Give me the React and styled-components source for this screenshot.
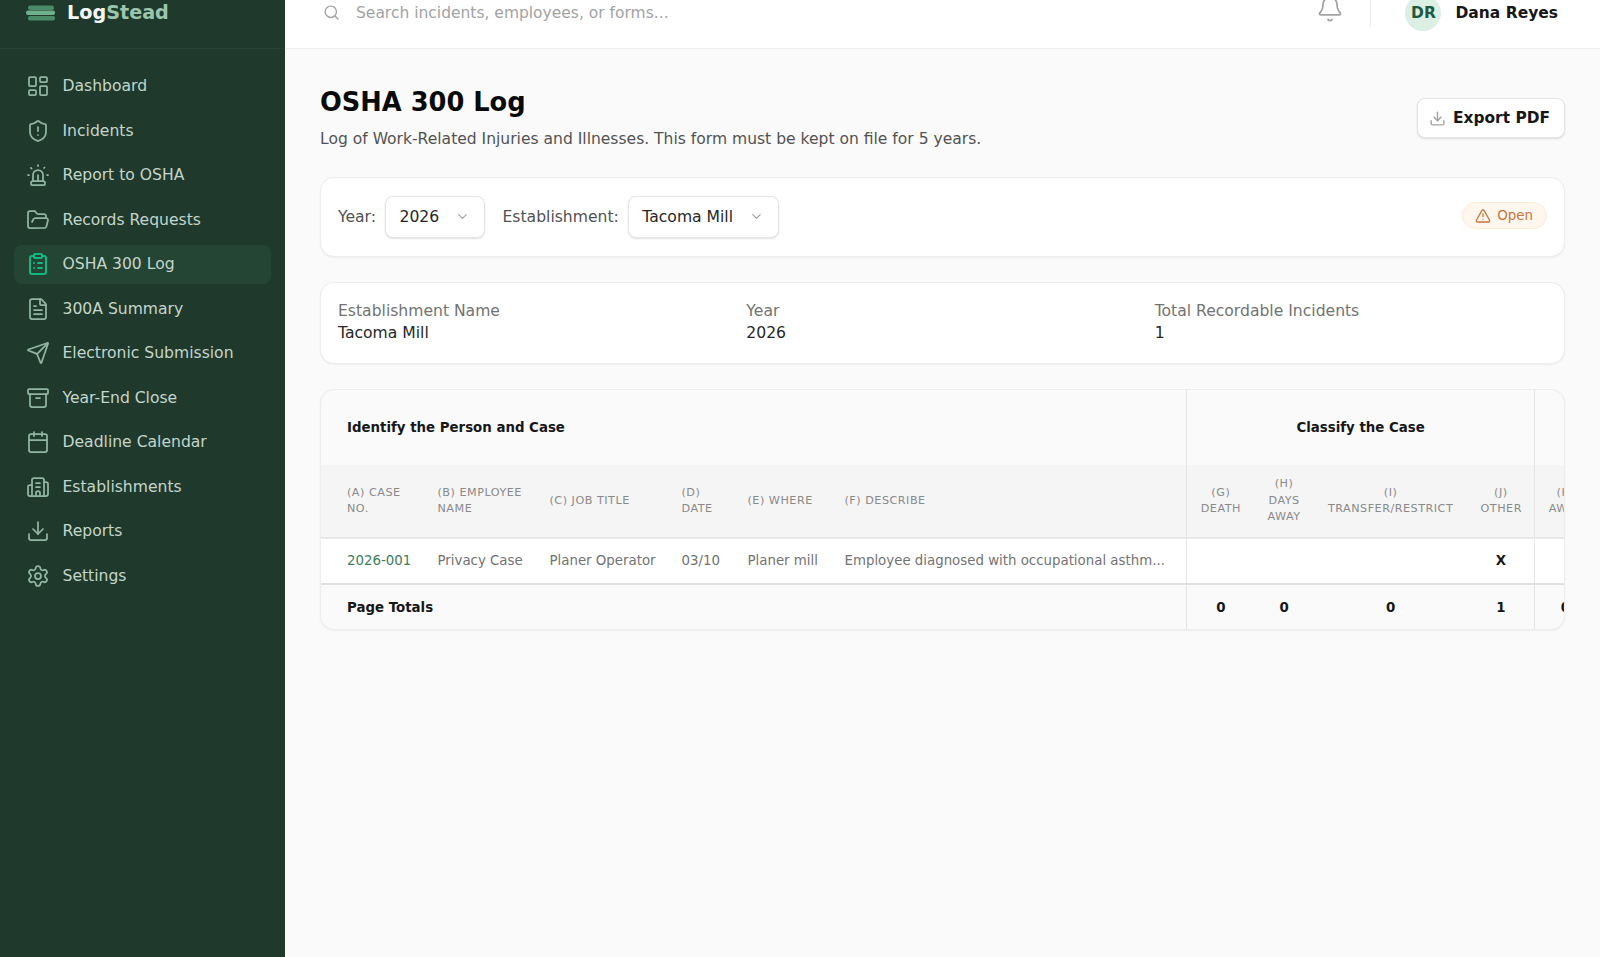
import styled, { createGlobalStyle } from "styled-components";
import {
  LayoutDashboard, ShieldAlert, Siren, FolderOpen, ClipboardList, FileText, Send,
  Archive, Calendar, Building2, Download, Settings, TriangleAlert, ChevronDown, Bell, Search,
} from "lucide-react";

const GlobalStyle = createGlobalStyle`
  html, body {
    margin: 0;
    height: 100%;
    overflow: hidden;
    background: #fafafa;
    font-family: "DejaVu Sans", Verdana, sans-serif;
  }
  * { box-sizing: border-box; }
`;

const Shell = styled.div`
  display: flex;
  height: 980px;
  margin-top: -23px;
`;

const Sidebar = styled.aside`
  width: 285px;
  flex-shrink: 0;
  background: #1f3a2d;
  display: flex;
  flex-direction: column;
`;
const Brand = styled.div`
  height: 72px;
  flex-shrink: 0;
  display: flex;
  align-items: center;
  gap: 11px;
  padding-left: 26px;
  border-bottom: 1px solid #254135;
`;
const BrandName = styled.span`
  font-size: 19.2px;
  font-weight: 700;
  color: #f5f7f6;
`;
const BrandAccent = styled.span`
  color: #9cc5ad;
`;
const Nav = styled.nav`
  display: flex;
  flex-direction: column;
  gap: 6px;
  padding: 18px 14px;
`;
const NavItem = styled.a`
  display: flex;
  align-items: center;
  gap: 12.5px;
  height: 38.5px;
  padding-left: 12px;
  border-radius: 8px;
  font-size: 15.6px;
  color: #c4d5cb;
  background: ${(props) => (props.$active ? "#244434" : "transparent")};
  svg {
    flex-shrink: 0;
    color: ${(props) => (props.$active ? "#10b981" : "#92b5a1")};
  }
`;

const Main = styled.div`
  flex: 1;
  min-width: 0;
  display: flex;
  flex-direction: column;
`;
const Header = styled.header`
  height: 72px;
  flex-shrink: 0;
  background: #fff;
  border-bottom: 1px solid #f0f0f0;
  display: flex;
  align-items: center;
  padding: 0 42px 0 38px;
`;
const SearchBox = styled.div`
  flex: 1;
  display: flex;
  align-items: center;
  gap: 16px;
  font-size: 15.5px;
  color: #a3a3a3;
  svg {
    color: #a3a3a3;
  }
`;
const BellButton = styled.div`
  display: flex;
  color: #a3a3a3;
  margin: 0 26px 7px 0;
`;
const Divider = styled.div`
  width: 1px;
  height: 28px;
  background: #ececec;
  margin-right: 34px;
`;
const Avatar = styled.div`
  width: 36px;
  height: 36px;
  border-radius: 50%;
  background: #dcefe4;
  color: #1f5a3f;
  font-size: 15.5px;
  font-weight: 700;
  display: flex;
  align-items: center;
  justify-content: center;
  margin-right: 14px;
`;
const UserName = styled.span`
  font-size: 15.5px;
  font-weight: 700;
  color: #171717;
`;

const Content = styled.main`
  flex: 1;
  min-width: 0;
  padding: 36px 35px 0 35px;
  display: flex;
  flex-direction: column;
`;
const TitleRow = styled.div`
  display: flex;
  justify-content: space-between;
  align-items: flex-start;
  margin-bottom: 25px;
`;
const Title = styled.h1`
  margin: 0 0 7px;
  font-size: 25.7px;
  line-height: 35px;
  font-weight: 700;
  color: #0a0a0a;
`;
const Subtitle = styled.p`
  margin: 0;
  font-size: 15.55px;
  line-height: 25px;
  color: #525252;
`;
const ExportButton = styled.button`
  display: flex;
  align-items: center;
  gap: 7px;
  height: 40px;
  margin-top: 13px;
  padding: 0 14px 0 11px;
  background: #fff;
  border: 1px solid #e5e5e5;
  border-radius: 8px;
  box-shadow: 0 1px 2px rgba(0, 0, 0, 0.12);
  font-family: inherit;
  font-size: 15.4px;
  font-weight: 700;
  color: #171717;
  svg {
    color: #a3a3a3;
  }
`;
const Card = styled.section`
  background: #fff;
  border: 1px solid #ededed;
  border-radius: 14px;
  box-shadow: 0 1px 2px rgba(0, 0, 0, 0.05);
  margin-bottom: 25px;
`;
const Toolbar = styled(Card)`
  height: 80px;
  display: flex;
  align-items: center;
  padding: 0 17px;
`;
const FilterLabel = styled.span`
  font-size: 15.6px;
  color: #525252;
  margin-right: 9px;
`;
const Select = styled.div`
  display: flex;
  align-items: center;
  justify-content: space-between;
  width: ${(props) => props.$width}px;
  height: 42px;
  padding: 0 14px 1px 13.5px;
  margin-right: 17.5px;
  background: #fff;
  border: 1px solid #e5e5e5;
  border-radius: 8px;
  box-shadow: 0 1px 2px rgba(0, 0, 0, 0.12);
  font-size: 15.6px;
  color: #262626;
  svg {
    color: #a3a3a3;
  }
`;
const Badge = styled.div`
  margin: 0 0 3px auto;
  display: flex;
  align-items: center;
  gap: 6px;
  height: 27px;
  padding: 0 13px 0 12.5px;
  background: #fff7ed;
  border: 1px solid #fdebd3;
  border-radius: 14px;
  font-size: 13.4px;
  color: #c8743f;
`;
const InfoCard = styled(Card)`
  display: grid;
  grid-template-columns: repeat(3, 1fr);
  gap: 16px;
  padding: 17px 17px 19px;
`;
const InfoLabel = styled.div`
  font-size: 15.6px;
  line-height: 22px;
  color: #737373;
`;
const InfoValue = styled.div`
  font-size: 15.6px;
  line-height: 22px;
  color: #262626;
`;

const TableCard = styled(Card)`
  overflow: hidden;
  background: #fafafa;
`;
const Table = styled.table`
  table-layout: fixed;
  width: ${(props) => props.$width}px;
  border-collapse: collapse;
`;
const GroupCell = styled.th`
  height: 75px;
  padding: 0 13px 0 ${(props) => (props.$first ? "26px" : "13px")};
  font-size: 13.35px;
  font-weight: 700;
  color: #171717;
  text-align: ${(props) => (props.$first ? "left" : "center")};
  border-left: ${(props) => (props.$first ? "none" : "1px solid #e5e5e5")};
`;
const HeadRow = styled.tr`
  background: #f5f5f5;
  border-bottom: 2px solid #e8e8e8;
`;
const HeadCell = styled.th`
  height: 73px;
  padding: 0 13px 0 ${(props) => (props.$first ? "26px" : "13px")};
  font-size: 11.2px;
  line-height: 16.5px;
  font-weight: 400;
  letter-spacing: 0.5px;
  color: #8a8a8a;
  text-transform: uppercase;
  text-align: ${(props) => (props.$center ? "center" : "left")};
  border-left: ${(props) => (props.$sep ? "1px solid #e5e5e5" : "none")};
`;
const BodyRow = styled.tr`
  background: #fff;
  border-bottom: 2px solid #e0e0e0;
`;
const BodyCell = styled.td`
  height: ${(props) => props.$height || 46}px;
  padding: 0 13px ${(props) => (props.$height ? 0 : 2)}px ${(props) => (props.$first ? "26px" : "13px")};
  font-size: 13.35px;
  color: ${(props) => (props.$link ? "#3f7d5c" : props.$strong ? "#171717" : "#737373")};
  font-weight: ${(props) => (props.$strong ? 700 : 400)};
  text-align: ${(props) => (props.$center ? "center" : "left")};
  white-space: nowrap;
  overflow: hidden;
  border-left: ${(props) => (props.$sep ? "1px solid #e5e5e5" : "none")};
`;

const LogoMark = () => (
  <svg width="30" height="16" viewBox="0 0 30 16" fill="none">
    <rect x="2" y="0.5" width="26" height="4.5" rx="2" fill="#4a8a68" />
    <rect x="0" y="5.5" width="29" height="4.5" rx="2" fill="#6fb08c" />
    <rect x="2" y="11" width="27" height="4.5" rx="2" fill="#4a8a68" />
  </svg>
);

const navItems = [
  { label: "Dashboard", icon: LayoutDashboard },
  { label: "Incidents", icon: ShieldAlert },
  { label: "Report to OSHA", icon: Siren },
  { label: "Records Requests", icon: FolderOpen },
  { label: "OSHA 300 Log", icon: ClipboardList, active: true },
  { label: "300A Summary", icon: FileText },
  { label: "Electronic Submission", icon: Send },
  { label: "Year-End Close", icon: Archive },
  { label: "Deadline Calendar", icon: Calendar },
  { label: "Establishments", icon: Building2 },
  { label: "Reports", icon: Download },
  { label: "Settings", icon: Settings },
];

const columns = [
  { label: "(A) Case No.", width: 103.5 },
  { label: "(B) Employee Name", width: 112 },
  { label: "(C) Job Title", width: 132 },
  { label: "(D) Date", width: 66 },
  { label: "(E) Where", width: 97 },
  { label: "(F) Describe", width: 355 },
  { label: "(G) Death", width: 68, center: true, sep: true },
  { label: "(H) Days Away", width: 59, center: true },
  { label: "(I) Transfer/Restrict", width: 154, center: true },
  { label: "(J) Other", width: 67, center: true },
  { label: "(K) Away", width: 61, center: true, sep: true },
];
const tableWidth = columns.reduce((total, col) => total + col.width, 0);

const App = () => {
  return (
    <>
      <GlobalStyle />
      <Shell>
        <Sidebar>
          <Brand>
            <LogoMark />
            <BrandName>
              Log<BrandAccent>Stead</BrandAccent>
            </BrandName>
          </Brand>
          <Nav>
            {navItems.map((item) => (
              <NavItem key={item.label} $active={item.active}>
                <item.icon size={24} strokeWidth={item.active ? 2 : 1.75} />
                {item.label}
              </NavItem>
            ))}
          </Nav>
        </Sidebar>
        <Main>
          <Header>
            <SearchBox>
              <Search size={17} />
              Search incidents, employees, or forms...
            </SearchBox>
            <BellButton>
              <Bell size={28} strokeWidth={1.5} />
            </BellButton>
            <Divider />
            <Avatar>DR</Avatar>
            <UserName>Dana Reyes</UserName>
          </Header>
          <Content>
            <TitleRow>
              <div>
                <Title>OSHA 300 Log</Title>
                <Subtitle>Log of Work-Related Injuries and Illnesses. This form must be kept on file for 5 years.</Subtitle>
              </div>
              <ExportButton>
                <Download size={17} />
                Export PDF
              </ExportButton>
            </TitleRow>
            <Toolbar>
              <FilterLabel>Year:</FilterLabel>
              <Select $width={100}>
                2026
                <ChevronDown size={15} />
              </Select>
              <FilterLabel>Establishment:</FilterLabel>
              <Select $width={151}>
                Tacoma Mill
                <ChevronDown size={15} />
              </Select>
              <Badge>
                <TriangleAlert size={16} />
                Open
              </Badge>
            </Toolbar>
            <InfoCard>
              <div>
                <InfoLabel>Establishment Name</InfoLabel>
                <InfoValue>Tacoma Mill</InfoValue>
              </div>
              <div>
                <InfoLabel>Year</InfoLabel>
                <InfoValue>2026</InfoValue>
              </div>
              <div>
                <InfoLabel>Total Recordable Incidents</InfoLabel>
                <InfoValue>1</InfoValue>
              </div>
            </InfoCard>
            <TableCard>
              <Table $width={tableWidth}>
                <colgroup>
                  {columns.map((col) => (
                    <col key={col.label} style={{ width: col.width }} />
                  ))}
                </colgroup>
                <thead>
                  <tr>
                    <GroupCell $first colSpan={6}>Identify the Person and Case</GroupCell>
                    <GroupCell colSpan={4}>Classify the Case</GroupCell>
                    <GroupCell />
                  </tr>
                  <HeadRow>
                    {columns.map((col, index) => (
                      <HeadCell key={col.label} $first={index === 0} $center={col.center} $sep={col.sep}>
                        {col.label}
                      </HeadCell>
                    ))}
                  </HeadRow>
                </thead>
                <tbody>
                  <BodyRow>
                    <BodyCell $first $link>2026-001</BodyCell>
                    <BodyCell>Privacy Case</BodyCell>
                    <BodyCell>Planer Operator</BodyCell>
                    <BodyCell>03/10</BodyCell>
                    <BodyCell>Planer mill</BodyCell>
                    <BodyCell>Employee diagnosed with occupational asthm...</BodyCell>
                    <BodyCell $sep />
                    <BodyCell />
                    <BodyCell />
                    <BodyCell $center $strong>X</BodyCell>
                    <BodyCell $sep />
                  </BodyRow>
                  <tr>
                    <BodyCell $first $strong $height={45} colSpan={6}>Page Totals</BodyCell>
                    <BodyCell $sep $center $strong $height={45}>0</BodyCell>
                    <BodyCell $center $strong $height={45}>0</BodyCell>
                    <BodyCell $center $strong $height={45}>0</BodyCell>
                    <BodyCell $center $strong $height={45}>1</BodyCell>
                    <BodyCell $sep $center $strong $height={45}>0</BodyCell>
                  </tr>
                </tbody>
              </Table>
            </TableCard>
          </Content>
        </Main>
      </Shell>
    </>
  );
};

export default App;
